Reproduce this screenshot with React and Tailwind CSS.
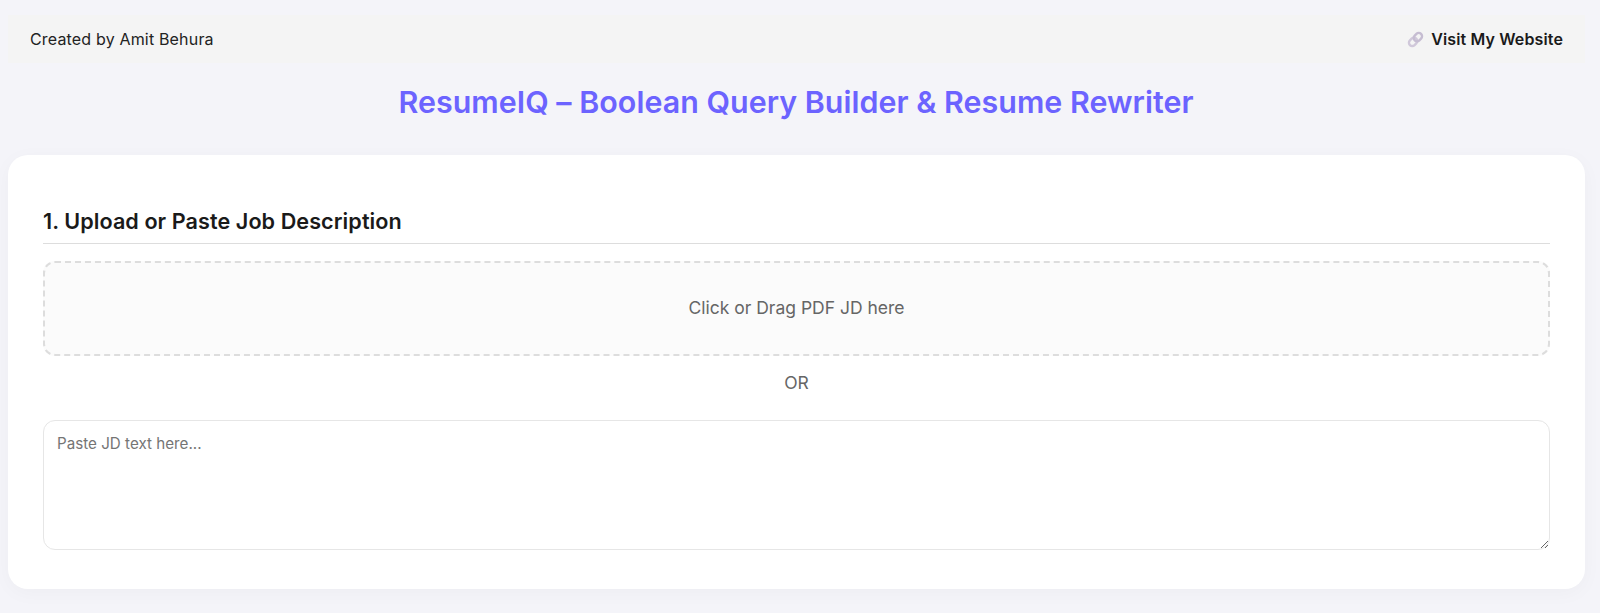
import React from 'react';

const ChainIcon = () => (
  <svg width="17" height="17" viewBox="0 0 17 17" fill="none" className="shrink-0">
    <g transform="rotate(-45 8.5 8.5)" stroke="#d0c8da" strokeWidth="2.4">
      <rect x="0.6" y="5.2" width="9" height="6.6" rx="3.3" />
      <rect x="7.4" y="5.2" width="9" height="6.6" rx="3.3" stroke="#c6bdd2" />
    </g>
  </svg>
);

export default function App() {
  return (
    <div className="min-h-[613px] bg-[#f4f4f9] px-2 pt-[15px] font-['Inter',sans-serif] text-[#1a1a1a]">
      <header className="mr-[7px] flex h-[48px] items-center justify-between bg-[#f4f4f4] pr-[22px] pl-[22px]">
        <span className="text-[16px] tracking-[0.17px] text-[#222222]">Created by Amit Behura</span>
        <a className="flex items-center gap-[7px] text-[16px] font-semibold tracking-[0.13px]">
          <ChainIcon />
          Visit My Website
        </a>
      </header>

      <h1 className="mt-[19px] mr-[8px] text-center text-[30.4px] leading-[40px] font-semibold tracking-[0.03px] text-[#6c63ff]">
        ResumeIQ – Boolean Query Builder &amp; Resume Rewriter
      </h1>

      <main className="mt-[33px] mr-[7px] h-[434px] rounded-[20px] bg-white px-[35px] pt-[53px] shadow-[0_4px_20px_rgba(0,0,0,0.03)]">
        <h2 className="border-b border-[#dddddd] pb-[9px] text-[21.6px] leading-[26px] font-semibold tracking-[0.07px]">
          1. Upload or Paste Job Description
        </h2>
        <div className="mt-[17px] flex h-[95px] items-center justify-center rounded-[12px] border-2 border-dashed border-[#dddddd] bg-[#fbfbfb] text-[17.5px] text-[#666666]">
          Click or Drag PDF JD here
        </div>
        <p className="mt-[17px] text-center text-[17.5px] leading-[20px] text-[#666666]">OR</p>
        <textarea
          placeholder="Paste JD text here..."
          className="mt-[27px] block h-[130px] w-full rounded-[12px] border border-[#e6e6e6] px-[13px] py-[12px] text-[15.2px] placeholder:text-[#757575]"
        />
      </main>
    </div>
  );
}
